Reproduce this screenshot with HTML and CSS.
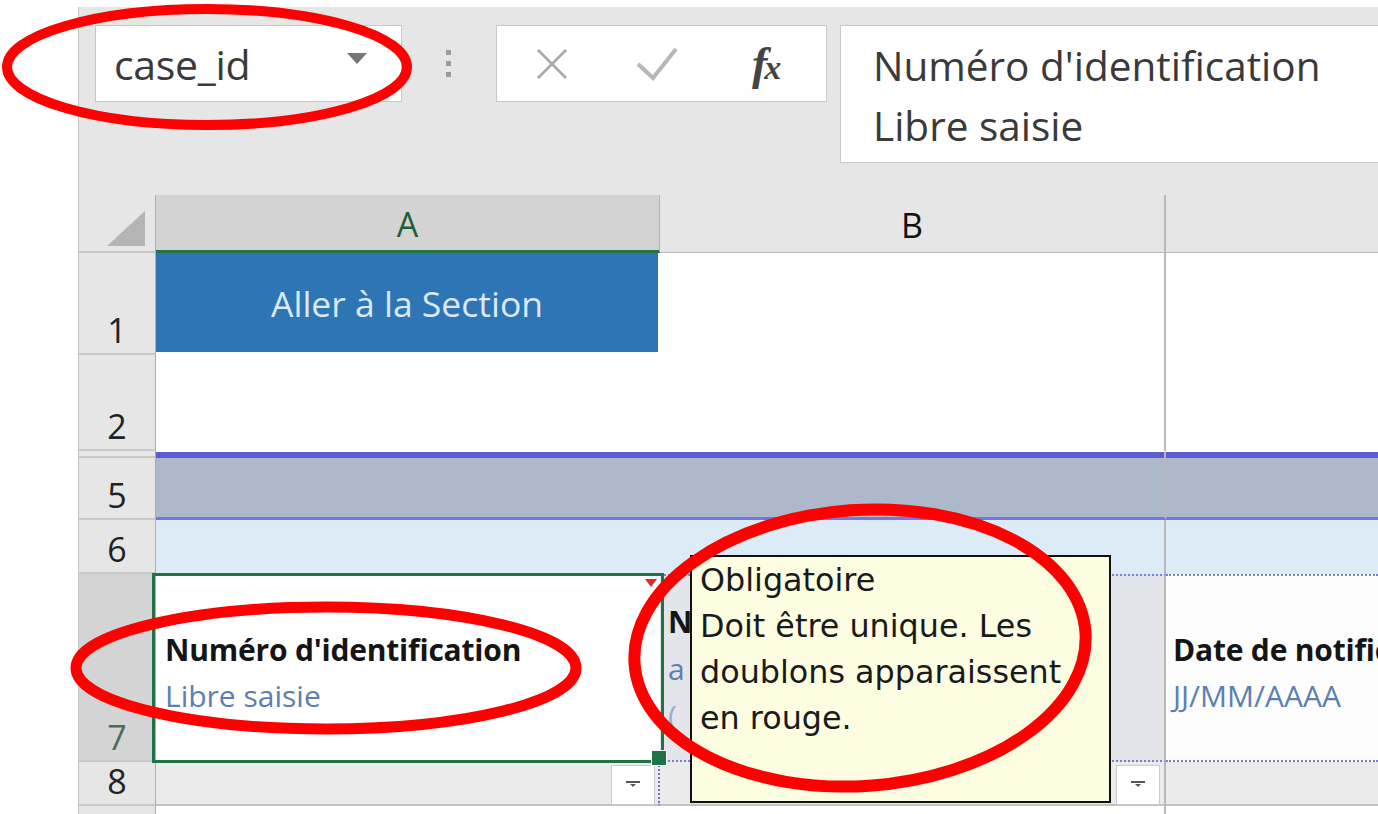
FILE: index.html
```html
<!DOCTYPE html>
<html lang="fr">
<head>
<meta charset="utf-8">
<title>Excel - case_id</title>
<link rel="stylesheet" href="styles.css">
</head>
<body>
<div class="app">
  <div class="fbar">
    <div class="namebox"><span class="nb-text">case_id</span><span class="nb-arrow"></span></div>
    <div class="grip"><i></i><i></i><i></i></div>
    <div class="fbtns">
      <svg class="ic-x" width="32" height="32" viewBox="0 0 32 32"><path d="M2 2 L30 30 M30 2 L2 30" stroke="#a9a9a9" stroke-width="2.6" fill="none"/></svg>
      <svg class="ic-ok" width="42" height="34" viewBox="0 0 42 34"><path d="M2 17 L17 31 L40 2" stroke="#b7b7b7" stroke-width="4" fill="none"/></svg>
      <span class="fx">f<span class="fx-x">x</span></span>
    </div>
    <div class="formula">
      <div>Numéro d'identification</div>
      <div>Libre saisie</div>
    </div>
  </div>

  <div class="sheet">
    <div class="row hdr">
      <div class="rh corner"><svg class="corner-tri" width="38" height="35" viewBox="0 0 38 35"><polygon points="38,0 38,35 0,35" fill="#b5b5b5"/></svg></div>
      <div class="ch ca">A</div>
      <div class="ch cb">B</div>
      <div class="ch cc"></div>
    </div>

    <div class="row r1">
      <div class="rh">1</div>
      <div class="c ca"><span class="goto">Aller à la Section</span></div>
      <div class="c cb"></div>
      <div class="c cc"></div>
    </div>

    <div class="row r2">
      <div class="rh">2</div>
      <div class="c ca"></div>
      <div class="c cb"></div>
      <div class="c cc"></div>
    </div>

    <div class="row rhid">
      <div class="rh"></div>
      <div class="c ca"></div>
      <div class="c cb"></div>
      <div class="c cc"></div>
    </div>

    <div class="row r5">
      <div class="rh">5</div>
      <div class="c ca"></div>
      <div class="c cb"></div>
      <div class="c cc"></div>
    </div>

    <div class="row r6">
      <div class="rh">6</div>
      <div class="c ca"></div>
      <div class="c cb"></div>
      <div class="c cc"></div>
    </div>

    <div class="row r7">
      <div class="rh">7</div>
      <div class="c ca field">
        <span class="flag"></span>
        <div class="f-title">Numéro d'identification</div>
        <div class="f-hint">Libre saisie</div>
      </div>
      <div class="c cb field three">
        <div class="f-title">N</div>
        <div class="f-hint">a</div>
        <div class="f-hint faint">(</div>
      </div>
      <div class="c cc field">
        <div class="f-title">Date de notification</div>
        <div class="f-hint">JJ/MM/AAAA</div>
      </div>
    </div>

    <div class="row r8">
      <div class="rh">8</div>
      <div class="c ca"><span class="dd"><svg width="16" height="10" viewBox="0 0 16 10"><rect x="1" y="1" width="14" height="2" fill="#555"/><polygon points="5,4 11,4 8,7" fill="#555"/></svg></span></div>
      <div class="c cb"><span class="dd"><svg width="16" height="10" viewBox="0 0 16 10"><rect x="1" y="1" width="14" height="2" fill="#555"/><polygon points="5,4 11,4 8,7" fill="#555"/></svg></span></div>
      <div class="c cc"></div>
    </div>

    <div class="row r9">
      <div class="rh"></div>
      <div class="c ca"></div>
      <div class="c cb"></div>
      <div class="c cc"></div>
    </div>
  </div>
</div>

<div class="tip">
  <div>Obligatoire</div>
  <div>Doit être unique. Les</div>
  <div>doublons apparaissent</div>
  <div>en rouge.</div>
</div>

<svg class="marks" width="1378" height="814" viewBox="0 0 1378 814">
  <ellipse cx="207" cy="67" rx="200" ry="58" fill="none" stroke="#ff0000" stroke-width="10"/>
  <ellipse cx="326" cy="668" rx="250" ry="61" fill="none" stroke="#ff0000" stroke-width="11"/>
  <ellipse cx="860" cy="648" rx="226" ry="138" fill="none" stroke="#ff0000" stroke-width="12" transform="rotate(-4 860 648)"/>
</svg>
</body>
</html>
```

FILE: styles.css
```css
* { box-sizing: border-box; }
html, body { margin: 0; }
body {
  width: 1378px;
  height: 814px;
  overflow: hidden;
  background: #ffffff;
  padding: 7px 0 0 78px;
  position: relative;
  font-family: "Open Sans", "Noto Sans", sans-serif;
  color: #222;
}

.app {
  height: 807px;
  background: #e6e6e6;
  border-left: 1px solid #c3c3c3;
  display: flex;
  flex-direction: column;
  overflow: hidden;
}

/* ---------- formula bar ---------- */
.fbar {
  height: 188px;
  flex: none;
  display: flex;
  align-items: flex-start;
  padding: 18px 0 0 16px;
}
.namebox {
  width: 307px;
  height: 77px;
  flex: none;
  background: #fff;
  border: 1px solid #c8c8c8;
  display: flex;
  align-items: center;
  justify-content: space-between;
  padding: 0 34px 0 18px;
}
.nb-text { font-size: 41px; color: #3a3a3a; line-height: 1; padding-top: 2px; letter-spacing: -0.3px; }
.nb-arrow {
  width: 0; height: 0;
  border-left: 10px solid transparent;
  border-right: 10px solid transparent;
  border-top: 11px solid #777;
  margin-top: -10px;
}
.grip {
  margin: 25px 0 0 44px;
  width: 6px;
  flex: none;
  display: flex;
  flex-direction: column;
  gap: 6px;
}
.grip i { display: block; width: 5px; height: 5px; background: #9c9c9c; }

.fbtns {
  margin-left: 44px;
  width: 331px;
  height: 77px;
  flex: none;
  background: #fff;
  border: 1px solid #c8c8c8;
  display: flex;
  align-items: center;
  padding-left: 39px;
}
.ic-x { flex: none; }
.ic-ok { flex: none; margin-left: 68px; }
.fx {
  margin-left: 74px;
  font-family: "Liberation Serif", serif;
  font-style: italic;
  font-weight: bold;
  font-size: 46px;
  color: #444;
  line-height: 1;
  letter-spacing: -3px;
}
.fx-x { font-size: 34px; }

.formula {
  margin-left: 13px;
  flex: 1;
  height: 138px;
  background: #fff;
  border: 1px solid #c8c8c8;
  border-right: none;
  padding: 10px 0 0 32px;
  font-size: 40.5px;
  line-height: 60px;
  color: #3a3a3a;
  white-space: nowrap;
}

/* ---------- sheet ---------- */
.sheet { flex: 1; display: flex; flex-direction: column; }
.row { display: flex; flex: none; }
.rh {
  width: 77px;
  flex: none;
  border-right: 1px solid #acacac;
  border-bottom: 2px solid #c8c8c8;
  display: flex;
  align-items: flex-end;
  justify-content: center;
  font-size: 34px;
  line-height: 1;
  color: #222;
  padding-bottom: 6px;
}
.ca { width: 504px; flex: none; }
.cb { width: 506px; flex: none; border-right: 2px solid #b9b9b9; }
.cc { flex: 1; }

.hdr { height: 58px; }
.hdr .corner { align-items: flex-end; justify-content: flex-end; padding: 0 10px 5px 0; }
.ch {
  display: flex;
  align-items: center;
  justify-content: center;
  font-size: 34px;
  border-bottom: 1px solid #b9b9b9;
  padding-top: 2px;
}
.hdr .ca {
  background: #d3d3d3;
  color: #1f5d39;
  border-bottom: 3px solid #217346;
  border-right: 1px solid #b5b5b5;
}
.hdr .cb { color: #111; }

.r1 { height: 102px; }
.r1 .c, .r2 .c { background: #fff; }
.r1 .ca {
  background: #2e75b6;
  border-right: 2px solid #fff;
  border-bottom: 3px solid #fff;
  display: flex;
  align-items: center;
  justify-content: center;
}
.goto {
  font-size: 35.5px;
  color: #dce9f6;
}
.r2 { height: 96px; }

.rhid { height: 7px; }
.rhid .c { background: #5c5cd2; border-top: 1px solid #fff; }
.rhid .rh { padding: 0; }

.r5 { height: 62px; }
.r5 .c { background: #adb9ca; border-bottom: 3px solid #7575e4; }

.r6 { height: 54px; }
.r6 .c { background: #ddebf7; }

.r7 { height: 188px; }
.r7 .rh { background: #d4d4d4; color: #4b6e5a; }
.field {
  display: flex;
  flex-direction: column;
  justify-content: center;
  padding: 10px 0 0 9px;
  white-space: nowrap;
  overflow: hidden;
  line-height: 46px;
}
.f-title { font-weight: bold; font-size: 30px; color: #151515; letter-spacing: -0.2px; }
.f-hint { font-size: 30px; color: #5b80b0; }
.f-hint.faint { color: #9aaecb; }
.r7 .ca { background: #fff; position: relative; overflow: visible; }
.r7 .ca::after {
  content: "";
  position: absolute;
  top: -1px; left: -4px; right: -4px; bottom: -1px;
  border: 3px solid #217346;
  z-index: 2;
}
.r7 .ca::before {
  content: "";
  position: absolute;
  right: -7px; bottom: -4px;
  width: 14px; height: 14px;
  background: #217346;
  border: 1px solid #fff;
  z-index: 3;
}
.flag {
  position: absolute;
  top: 5px; right: 3px;
  width: 0; height: 0;
  border-left: 6px solid transparent;
  border-right: 6px solid transparent;
  border-top: 8px solid #e2262b;
}
.r7 .cb {
  background: #e4e5eb;
  border-top: 2px dotted #7d7dd8;
  border-bottom: 2px dotted #7d7dd8;
  padding: 0 0 0 8px;
  line-height: 47px;
}
.r7 .cc {
  background: #fdfdfd;
  border-top: 2px dotted #7d7dd8;
  border-bottom: 2px dotted #7d7dd8;
  padding-left: 7px;
}

.r8 { height: 44px; }
.r8 .c {
  background: #ebebeb;
  border-bottom: 2px solid #c2c2c2;
  display: flex;
  justify-content: flex-end;
  align-items: flex-start;
  padding-top: 3px;
}
.r8 .ca { border-right: 2px dotted #6c6cd6; padding-right: 3px; }
.r8 .cb { padding-right: 4px; }
.dd {
  width: 44px;
  height: 40px;
  background: #fff;
  border: 1px solid #cbcbcb;
  display: flex;
  align-items: center;
  justify-content: center;
}

.r9 { flex: 1; }
.r9 .rh { border-bottom: none; }
.r9 .c { background: #fff; }

/* ---------- tooltip (comment) ---------- */
.tip {
  position: absolute;
  left: 690px;
  top: 555px;
  width: 421px;
  height: 248px;
  background: #fdfde2;
  border: 2px solid #111;
  padding: 0 0 0 8px;
  font-family: "DejaVu Sans", sans-serif;
  font-size: 31.8px;
  line-height: 46px;
  color: #1a1a1a;
  white-space: nowrap;
  z-index: 5;
}

/* ---------- red annotation marks ---------- */
.marks {
  position: absolute;
  left: 0;
  top: 0;
  z-index: 10;
  pointer-events: none;
}
```
